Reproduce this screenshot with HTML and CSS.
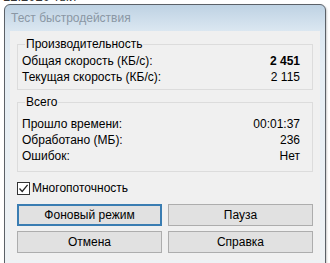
FILE: index.html
```html
<!DOCTYPE html>
<html lang="ru">
<head>
    <meta charset="UTF-8">
    <meta name="viewport" content="width=device-width, initial-scale=1.0">
    <title>Тест быстродействия</title>
    <link rel="stylesheet" href="styles.css">
</head>
<body>
    <div class="backdrop"><span>12.2020 тыи</span></div>
    <div class="window">
        <div class="titlebar">Тест быстродействия</div>
        <div class="content">
            <fieldset class="group">
                <legend>Производительность</legend>
                <div class="row"><span>Общая скорость (КБ/с):</span><b>2 451</b></div>
                <div class="row"><span>Текущая скорость (КБ/с):</span><span>2 115</span></div>
            </fieldset>
            <fieldset class="group second">
                <legend>Всего</legend>
                <div class="row"><span>Прошло времени:</span><span>00:01:37</span></div>
                <div class="row"><span>Обработано (МБ):</span><span>236</span></div>
                <div class="row"><span>Ошибок:</span><span>Нет</span></div>
            </fieldset>
            <label class="check">
                <span class="box">
                    <svg width="11" height="11" viewBox="0 0 11 11"><path d="M1.5 5.5 L4.2 8.4 L9.6 1.8" fill="none" stroke="#222" stroke-width="1.3"/></svg>
                </span>
                Многопоточность
            </label>
            <div class="buttons">
                <button class="btn default">Фоновый режим</button>
                <button class="btn">Пауза</button>
                <button class="btn">Отмена</button>
                <button class="btn">Справка</button>
            </div>
        </div>
    </div>
</body>
</html>
```

FILE: styles.css
```css
body {
    margin: 0;
    background: #fff;
    font-family: 'Liberation Sans', Arial, sans-serif;
    font-size: 12px;
    color: #000;
}
.backdrop {
    height: 4px;
    overflow: hidden;
    padding-left: 3px;
}
.backdrop span {
    display: block;
    margin-top: -10px;
    font-size: 13px;
    line-height: 14px;
    color: #333;
}
.window {
    margin-left: 4px;
    width: 310px;
    height: 255px;
    border: 1px solid #5b6168;
    border-radius: 6px 6px 0 0;
    background: linear-gradient(180deg, #bed2e3 0px, #dbe7f1 26px, #e4edf4 60px, #eef2f5 100%);
    padding: 0 5px 3px 5px;
    display: flex;
    flex-direction: column;
    box-shadow: 1px 1px 2px rgba(0,0,0,0.2);
}
.titlebar {
    height: 26px;
    line-height: 26px;
    color: #8a97a4;
    padding-left: 1px;
    flex: none;
}
.content {
    flex: 1;
    background: #f0f0f0;
    padding: 6px 7px 0 7px;
    display: flex;
    flex-direction: column;
}
.group {
    margin: 0;
    border: 1px solid #dcdcdc;
    padding: 2px 12px 4px 4px;
    min-width: 0;
}
.group legend {
    padding: 0 1px;
    margin-left: 3px;
    line-height: 14px;
}
.group.second {
    margin-top: 5px;
    padding-top: 7px;
    padding-bottom: 7px;
}
.row {
    display: flex;
    justify-content: space-between;
    line-height: 16px;
    height: 16px;
}
.check {
    display: flex;
    align-items: center;
    gap: 2px;
    margin-top: 9px;
    height: 14px;
}
.check .box {
    width: 11px;
    height: 11px;
    border: 1px solid #333;
    background: #fff;
    display: flex;
    align-items: center;
    justify-content: center;
}
.buttons {
    display: grid;
    grid-template-columns: 1fr 1fr;
    column-gap: 6px;
    row-gap: 5px;
    margin-top: 9px;
}
.btn {
    height: 22px;
    font-family: inherit;
    font-size: 12px;
    background: #e1e1e1;
    border: 1px solid #adadad;
    color: #000;
    padding: 0;
}
.btn.default {
    border: 2px solid #3a7db2;
}
```
